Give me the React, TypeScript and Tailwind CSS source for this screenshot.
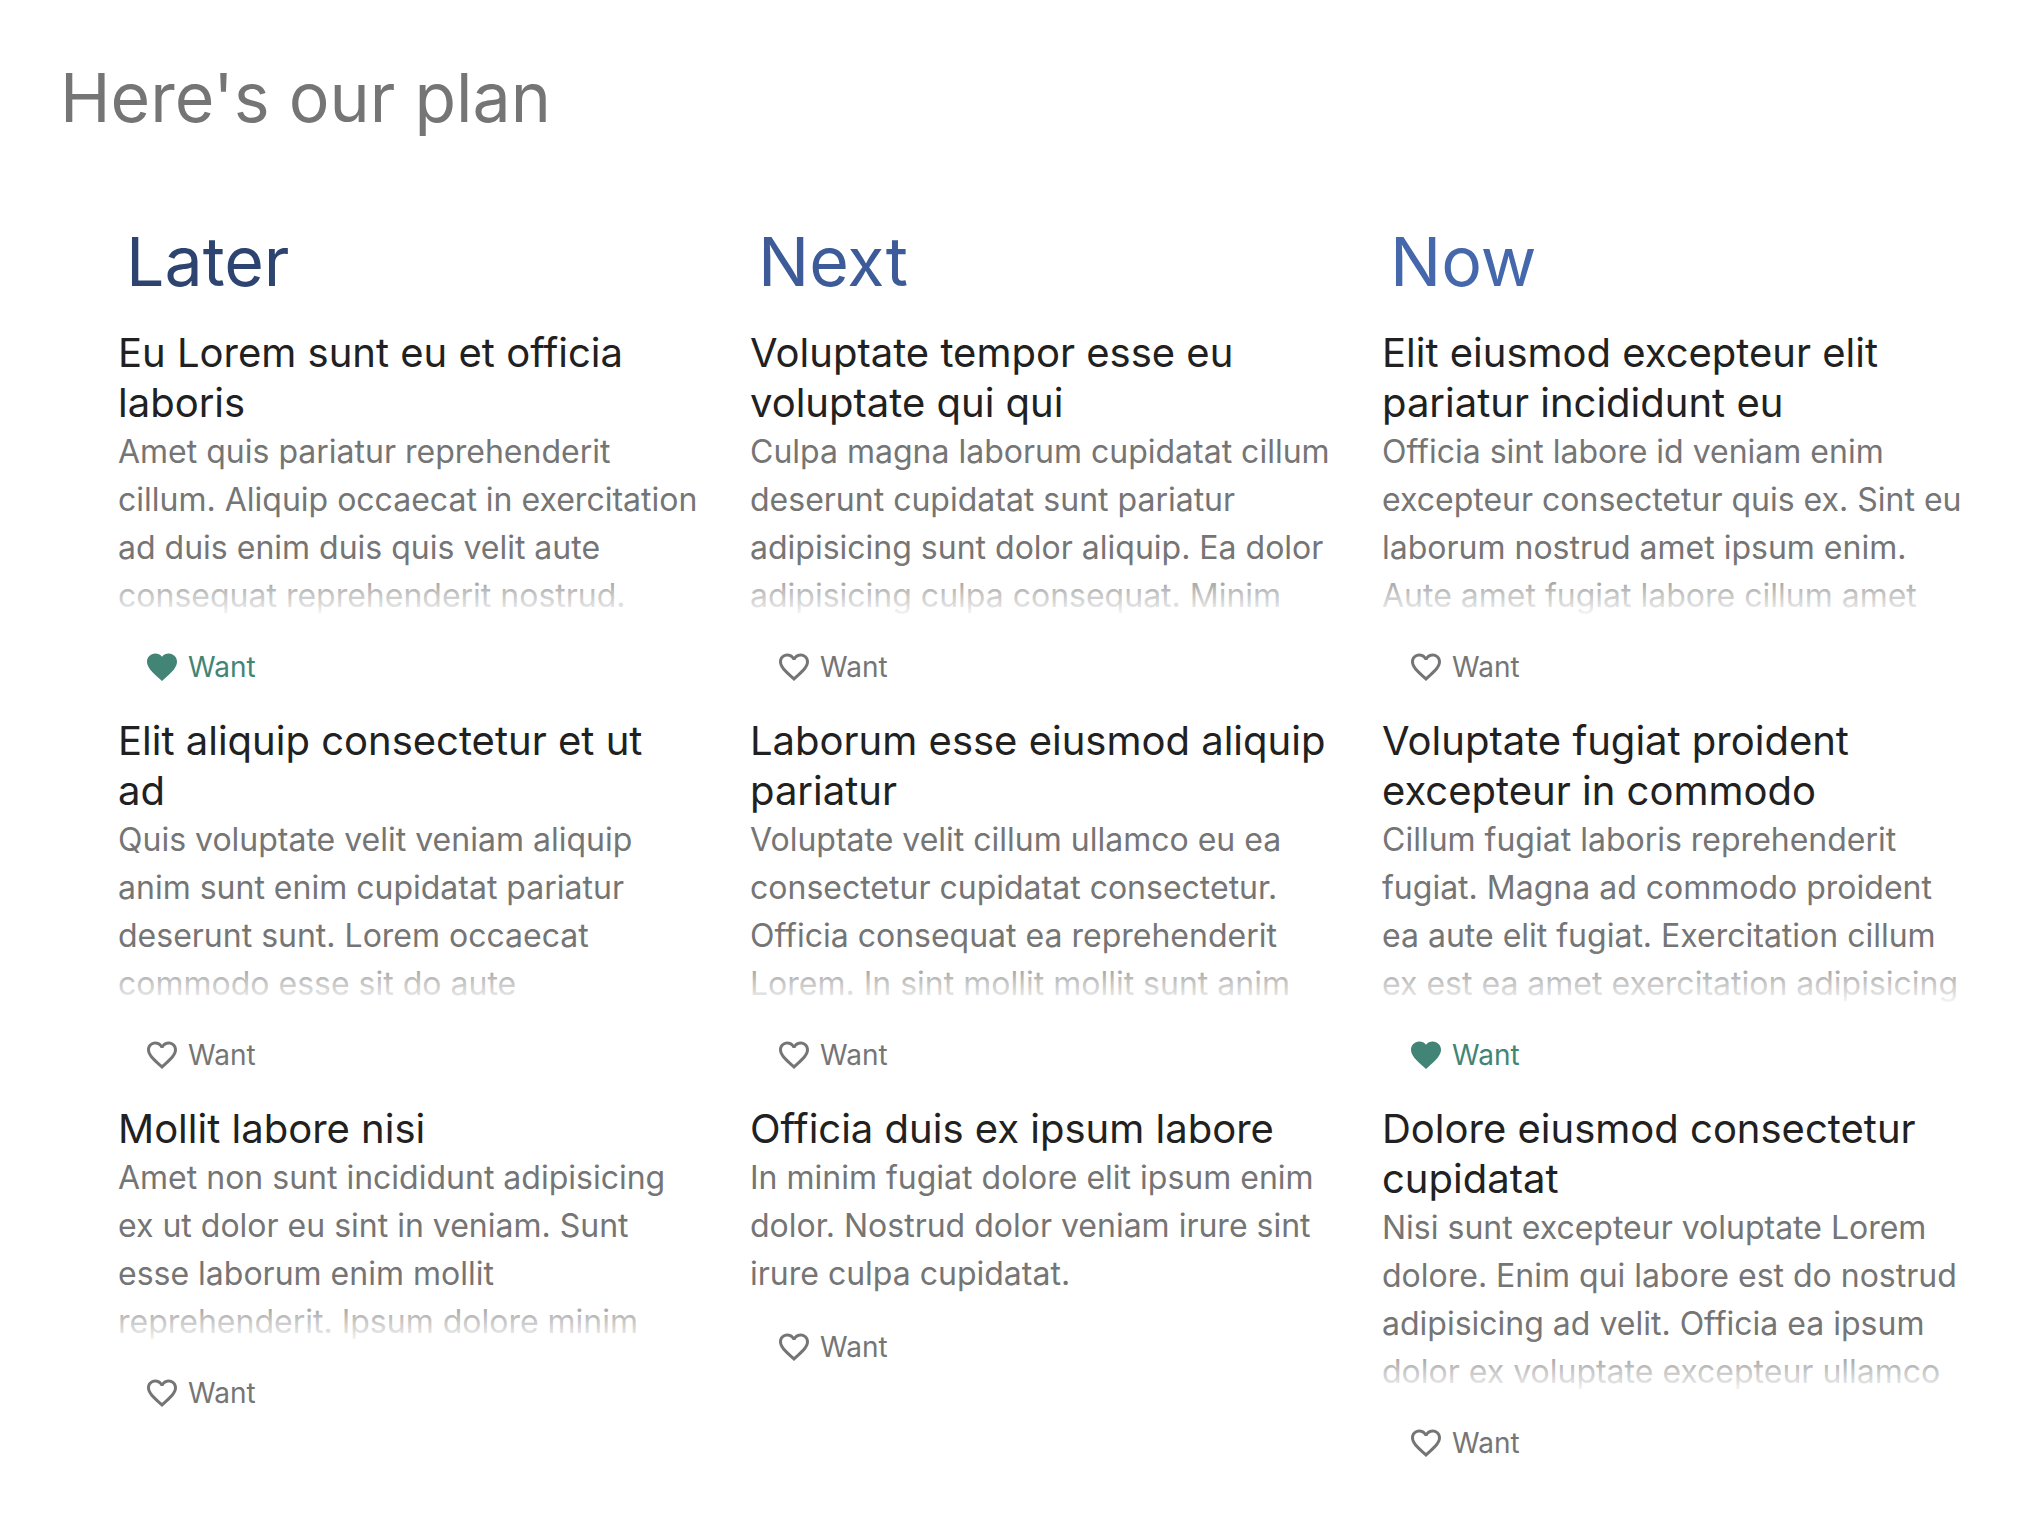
import { useState } from "react";
import { MdFavorite, MdFavoriteBorder } from "react-icons/md";

type Item = { title: string; body: string; wanted?: boolean };
type Column = { name: string; color: string; items: Item[] };

const columns: Column[] = [
  {
    name: "Later",
    color: "text-[#2c446f]",
    items: [
      {
        title: "Eu Lorem sunt eu et officia laboris",
        body: "Amet quis pariatur reprehenderit cillum. Aliquip occaecat in exercitation ad duis enim duis quis velit aute consequat reprehenderit nostrud.",
        wanted: true,
      },
      {
        title: "Elit aliquip consectetur et ut ad",
        body: "Quis voluptate velit veniam aliquip anim sunt enim cupidatat pariatur deserunt sunt. Lorem occaecat commodo esse sit do aute",
      },
      {
        title: "Mollit labore nisi",
        body: "Amet non sunt incididunt adipisicing ex ut dolor eu sint in veniam. Sunt esse laborum enim mollit reprehenderit. Ipsum dolore minim",
      },
    ],
  },
  {
    name: "Next",
    color: "text-[#3c5b98]",
    items: [
      {
        title: "Voluptate tempor esse eu voluptate qui qui",
        body: "Culpa magna laborum cupidatat cillum deserunt cupidatat sunt pariatur adipisicing sunt dolor aliquip. Ea dolor adipisicing culpa consequat. Minim",
      },
      {
        title: "Laborum esse eiusmod aliquip pariatur",
        body: "Voluptate velit cillum ullamco eu ea consectetur cupidatat consectetur. Officia consequat ea reprehenderit Lorem. In sint mollit mollit sunt anim",
      },
      {
        title: "Officia duis ex ipsum labore",
        body: "In minim fugiat dolore elit ipsum enim dolor. Nostrud dolor veniam irure sint irure culpa cupidatat.",
      },
    ],
  },
  {
    name: "Now",
    color: "text-[#4468ab]",
    items: [
      {
        title: "Elit eiusmod excepteur elit pariatur incididunt eu",
        body: "Officia sint labore id veniam enim excepteur consectetur quis ex. Sint eu laborum nostrud amet ipsum enim. Aute amet fugiat labore cillum amet",
      },
      {
        title: "Voluptate fugiat proident excepteur in commodo",
        body: "Cillum fugiat laboris reprehenderit fugiat. Magna ad commodo proident ea aute elit fugiat. Exercitation cillum ex est ea amet exercitation adipisicing",
        wanted: true,
      },
      {
        title: "Dolore eiusmod consectetur cupidatat",
        body: "Nisi sunt excepteur voluptate Lorem dolore. Enim qui labore est do nostrud adipisicing ad velit. Officia ea ipsum dolor ex voluptate excepteur ullamco",
      },
    ],
  },
];

function WantButton({ initial }: { initial: boolean }) {
  const [wanted, setWanted] = useState(initial);
  const Icon = wanted ? MdFavorite : MdFavoriteBorder;
  return (
    <button
      type="button"
      aria-pressed={wanted}
      onClick={() => setWanted(!wanted)}
      className={`flex cursor-pointer items-center gap-2 px-[26px] py-3 text-[28px] leading-[50px] ${
        wanted ? "text-[#428475]" : "text-[#757575]"
      }`}
    >
      <Icon className="size-9" aria-hidden="true" />
      Want
    </button>
  );
}

function Card({ item }: { item: Item }) {
  return (
    <article>
      <h3 className="text-[40px] leading-[50px] text-[#212121]">{item.title}</h3>
      <div className="relative max-h-[190px] overflow-hidden">
        <p className="text-[32px] leading-[48px] text-[#757575]">{item.body}</p>
        <div className="absolute inset-x-0 top-[134px] h-14 bg-linear-to-b from-white/0 to-white" />
      </div>
      <div className="py-3">
        <WantButton initial={item.wanted ?? false} />
      </div>
    </article>
  );
}

export default function App() {
  return (
    <main className="min-h-screen bg-white pt-[55px] font-['Inter',sans-serif]">
      <h1 className="px-[60px] text-[68px] leading-[84px] text-[#757575]">Here's our plan</h1>
      <div className="mt-20 grid grid-cols-3 gap-13 pr-[78px] pl-[118px]">
        {columns.map((column) => (
          <section key={column.name}>
            <h2 className={`mb-[25px] px-2 text-[68px] leading-[84px] ${column.color}`}>{column.name}</h2>
            {column.items.map((item) => (
              <Card key={item.title} item={item} />
            ))}
          </section>
        ))}
      </div>
    </main>
  );
}
